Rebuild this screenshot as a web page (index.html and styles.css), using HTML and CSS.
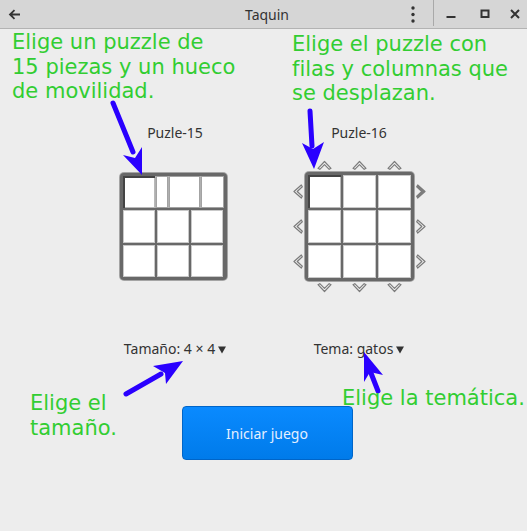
FILE: index.html
```html
<!DOCTYPE html>
<html lang="es">
<head>
<meta charset="utf-8">
<title>Taquin</title>
<link rel="stylesheet" href="styles.css">
</head>
<body>
<svg class="defs" width="0" height="0" aria-hidden="true">
  <defs>
    <symbol id="chev-up" viewBox="0 0 15 10"><path d="M1 8.3 L7.5 1.5 L14 8.3 L12.2 9.3 L7.5 4.6 L2.8 9.3 Z"/></symbol>
    <symbol id="chev-down" viewBox="0 0 15 10"><path d="M1 1.7 L7.5 8.5 L14 1.7 L12.2 0.7 L7.5 5.4 L2.8 0.7 Z"/></symbol>
    <symbol id="chev-left" viewBox="0 0 11 15"><path d="M9.3 1 L2 7.5 L9.3 14 L10.3 12.2 L5.2 7.5 L10.3 2.8 Z"/></symbol>
    <symbol id="chev-right" viewBox="0 0 11 15"><path d="M1.7 1 L9 7.5 L1.7 14 L0.7 12.2 L5.8 7.5 L0.7 2.8 Z"/></symbol>
  </defs>
</svg>
<div class="window">
  <header class="titlebar">
    <div class="tb-left">
      <span class="tb-btn back">
        <svg width="13" height="11" viewBox="0 0 13 11"><path d="M12 5.5 H2.5 M6.5 1.2 L2 5.5 L6.5 9.8" fill="none" stroke="#333" stroke-width="1.8"/></svg>
      </span>
    </div>
    <div class="title">Taquin</div>
    <div class="tb-right">
      <span class="tb-btn kebab">
        <svg width="4" height="17" viewBox="0 0 4 17"><circle cx="2" cy="2" r="1.7" fill="#333"/><circle cx="2" cy="8.5" r="1.7" fill="#333"/><circle cx="2" cy="15" r="1.7" fill="#333"/></svg>
      </span>
      <span class="tb-sep"></span>
      <span class="tb-btn wmin">
        <svg width="10" height="10" viewBox="0 0 10 10"><rect x="0.5" y="7" width="9" height="2" fill="#333"/></svg>
      </span>
      <span class="tb-btn wmax">
        <svg width="10" height="10" viewBox="0 0 10 10"><rect x="1.5" y="1.5" width="7" height="6.5" fill="none" stroke="#333" stroke-width="2"/></svg>
      </span>
      <span class="tb-btn wclose">
        <svg width="10" height="10" viewBox="0 0 10 10"><path d="M1 1 L9 9 M9 1 L1 9" stroke="#333" stroke-width="2"/></svg>
      </span>
    </div>
  </header>

  <main class="content">
    <div class="boards">
      <section class="choice">
        <div class="label">Puzle-15</div>
        <div class="board-wrap">
          <div class="frame frame15">
            <div class="slide-row">
              <span class="piece p1"></span>
              <span class="piece p2"></span>
              <span class="piece p3"></span>
              <span class="piece p4"></span>
            </div>
            <div class="cell-row">
              <span class="cell"></span><span class="cell"></span><span class="cell"></span>
            </div>
            <div class="cell-row">
              <span class="cell"></span><span class="cell"></span><span class="cell"></span>
            </div>
          </div>
        </div>
      </section>

      <section class="choice">
        <div class="label">Puzle-16</div>
        <div class="board-wrap">
          <div class="chev-row top">
            <svg class="chev h"><use href="#chev-up"/></svg>
            <svg class="chev h"><use href="#chev-up"/></svg>
            <svg class="chev h"><use href="#chev-up"/></svg>
          </div>
          <div class="chev-col left">
            <svg class="chev v"><use href="#chev-left"/></svg>
            <svg class="chev v"><use href="#chev-left"/></svg>
            <svg class="chev v"><use href="#chev-left"/></svg>
          </div>
          <div class="frame frame16">
            <span class="cell dark"></span><span class="cell"></span><span class="cell"></span>
            <span class="cell"></span><span class="cell"></span><span class="cell"></span>
            <span class="cell"></span><span class="cell"></span><span class="cell"></span>
          </div>
          <div class="chev-col right">
            <svg class="chev v active"><use href="#chev-right"/></svg>
            <svg class="chev v"><use href="#chev-right"/></svg>
            <svg class="chev v"><use href="#chev-right"/></svg>
          </div>
          <div class="chev-row bottom">
            <svg class="chev h"><use href="#chev-down"/></svg>
            <svg class="chev h"><use href="#chev-down"/></svg>
            <svg class="chev h"><use href="#chev-down"/></svg>
          </div>
        </div>
      </section>
    </div>

    <div class="options">
      <div class="option">Tamaño: 4 × 4<svg class="caret" width="8" height="8" viewBox="0 0 8 8"><path d="M0 0.5 H8 L4 7.5 Z" fill="#333"/></svg></div>
      <div class="option">Tema: gatos<svg class="caret" width="8" height="8" viewBox="0 0 8 8"><path d="M0 0.5 H8 L4 7.5 Z" fill="#333"/></svg></div>
    </div>

    <button class="start">Iniciar juego</button>
  </main>

  <div class="notes">
    <svg class="arrows" width="527" height="531" viewBox="0 0 527 531">
      <g stroke="#2a00ff" stroke-width="5" stroke-linecap="round" fill="none">
        <line x1="113" y1="103" x2="133" y2="152"/>
        <line x1="310" y1="111" x2="312" y2="146"/>
        <line x1="126" y1="394" x2="161" y2="374"/>
        <line x1="378" y1="391" x2="369" y2="368"/>
      </g>
      <g fill="#2a00ff">
        <polygon points="142,175 123,155 135,158 142,147"/>
        <polygon points="314,169 302,143 313,149 324,142"/>
        <polygon points="183,361 153,366 165,373 166,384"/>
        <polygon points="364,352 364,382 370,372 383,375"/>
      </g>
    </svg>
    <p class="note n1">Elige un puzzle de<br>15 piezas y un hueco<br>de movilidad.</p>
    <p class="note n2">Elige el puzzle con<br>filas y columnas que<br>se desplazan.</p>
    <p class="note n3">Elige el<br>tamaño.</p>
    <p class="note n4">Elige la temática.</p>
  </div>
</div>
</body>
</html>
```
FILE: styles.css
```css
* { box-sizing: border-box; }

html, body {
  margin: 0;
  padding: 0;
  background: #ededed;
}

.defs { position: absolute; width: 0; height: 0; overflow: hidden; }

.window {
  position: relative;
  width: 527px;
  height: 531px;
  overflow: hidden;
  background: #ededed;
  font-family: "Noto Sans", "Open Sans", sans-serif;
  color: #333;
}

/* title bar */
.titlebar {
  height: 29px;
  background: #d6d6d6;
  border-bottom: 1px solid #b3b3b3;
  display: grid;
  grid-template-columns: 1fr auto 1fr;
  align-items: center;
}
.tb-left { display: flex; }
.tb-right { display: flex; justify-content: flex-end; align-items: center; height: 28px; }
.tb-btn { display: flex; align-items: center; justify-content: center; height: 28px; }
.back { width: 29px; }
.title {
  font-size: 14px;
  padding-left: 7px;
  color: #333;
}
.kebab { width: 26px; margin-right: 7px; }
.tb-sep { width: 1px; height: 26px; align-self: flex-start; background: #a9a9a9; }
.wmin { width: 34px; }
.wmax { width: 34px; }
.wclose { width: 25px; }

/* content */
.content {
  display: flex;
  flex-direction: column;
  align-items: center;
  padding: 95px 0 0 7px;
}

.boards, .options {
  display: grid;
  grid-template-columns: 137px 137px;
  column-gap: 47px;
}

.choice {
  display: flex;
  flex-direction: column;
  align-items: center;
}

.label {
  font-size: 14px;
  line-height: 18px;
  margin-bottom: 18px;
}

.board-wrap {
  display: grid;
  grid-template-columns: 11px 109px 11px;
  grid-template-rows: 10px 109px 10px;
  column-gap: 2px;
  row-gap: 2px;
}

.frame {
  grid-column: 2;
  grid-row: 2;
  background: #686868;
  border-radius: 4px;
  padding: 3px;
  box-shadow: 0 0 0 1px #a5a5a5;
}

.frame16 {
  display: grid;
  grid-template-columns: repeat(3, 1fr);
  grid-template-rows: repeat(3, 1fr);
  gap: 2px;
}

.frame15 {
  display: grid;
  grid-template-rows: repeat(3, 1fr);
  row-gap: 2px;
  width: 107px;
  height: 107px;
  margin: 1px 0 0 -1px;
}

.slide-row {
  display: flex;
  gap: 1px;
  background: #b0b0b0;
}
.cell-row {
  display: grid;
  grid-template-columns: repeat(3, 1fr);
  gap: 2px;
}

.cell, .piece {
  background: #fff;
  box-shadow: inset 0 0 0 1px #c9c9c9;
}
.piece { box-shadow: inset 0 0 0 1px #a3a3a3; flex-shrink: 0; }
.cell.dark, .piece.p1 {
  box-shadow: inset 1px 1px 0 1px #444, inset 0 0 0 1px #b9b9b9;
}
.p1 { width: 32px; }
.p2 { width: 12px; }
.p3 { width: 31px; }
.p4 { flex: 1 1 auto; }

.chev-row {
  grid-column: 2;
  display: grid;
  grid-template-columns: repeat(3, 1fr);
  gap: 2px;
  padding: 0 3px;
  justify-items: center;
}
.chev-row.top { grid-row: 1; }
.chev-row.bottom { grid-row: 3; }

.chev-col {
  grid-row: 2;
  display: grid;
  grid-template-rows: repeat(3, 1fr);
  gap: 2px;
  padding: 3px 0;
  align-items: center;
}
.chev-col.left { grid-column: 1; }
.chev-col.right { grid-column: 3; }

.chev {
  fill: #f3f3f3;
  stroke: #7b7b7b;
  stroke-width: 1.2;
  stroke-linejoin: round;
  overflow: visible;
}
.chev.h { width: 15px; height: 10px; }
.chev.v { width: 11px; height: 15px; }
.chev.active { fill: #7e7e7e; }

/* options */
.options {
  margin-top: 47px;
  font-size: 14px;
  line-height: 18px;
}
.option {
  text-align: center;
  white-space: nowrap;
}
.caret { margin-left: 3px; vertical-align: 0; }

.start {
  margin-top: 48px;
  width: 171px;
  height: 54px;
  border: 1px solid #0065c8;
  border-radius: 4px;
  background: linear-gradient(#0a8aff, #007bea);
  color: #e4efff;
  font-family: "Noto Sans", "Open Sans", sans-serif;
  font-size: 14px;
}

/* annotations overlay */
.notes {
  position: absolute;
  inset: 0;
  pointer-events: none;
}
.arrows { position: absolute; left: 0; top: 0; }
.note {
  position: absolute;
  margin: 0;
  font-family: "DejaVu Sans", sans-serif;
  font-size: 21px;
  line-height: 24.5px;
  color: #32cd32;
  white-space: nowrap;
}
.n1 { left: 12px; top: 30px; }
.n2 { left: 292px; top: 32px; }
.n3 { left: 30px; top: 391px; }
.n4 { left: 342px; top: 386px; }
```
